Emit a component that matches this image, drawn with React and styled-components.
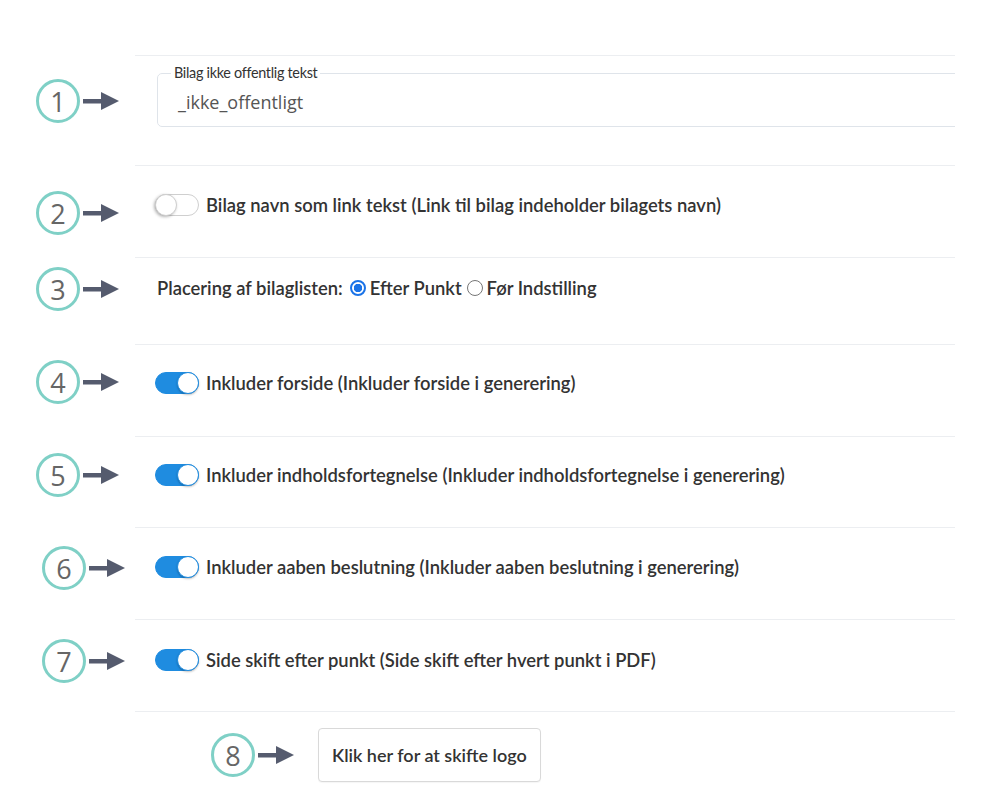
import React from 'react';
import styled, { createGlobalStyle } from 'styled-components';

const GlobalStyle = createGlobalStyle`
  html, body {
    margin: 0;
    padding: 0;
    background: #ffffff;
    font-family: Lato, "Open Sans", sans-serif;
  }
`;

const Page = styled.div`
  width: 981px;
  height: 795px;
  padding-top: 55px;
  box-sizing: border-box;
  overflow: hidden;
`;

const Row = styled.div`
  display: grid;
  grid-template-columns: 135px 820px;
  height: ${p => p.$height}px;
`;

const CalloutCell = styled.div`
  display: flex;
  align-items: center;
  height: 44px;
  padding-top: ${p => p.$center - 22}px;
  padding-left: ${p => p.$left}px;
  gap: 3px;
`;

const Circle = styled.div`
  width: 44px;
  height: 44px;
  box-sizing: border-box;
  border: 3.5px solid #7fd0c6;
  border-radius: 50%;
  display: flex;
  align-items: center;
  justify-content: center;
  font-family: "Open Sans", sans-serif;
  font-size: 27px;
  font-weight: 400;
  color: #666666;
  line-height: 1;
  flex-shrink: 0;
`;

const Content = styled.div`
  border-top: 1px solid #eceef1;
  padding-top: ${p => p.$pad}px;
  padding-left: ${p => p.$left ?? 20}px;
  overflow: hidden;
  box-sizing: border-box;
`;

const Line = styled.div`
  display: flex;
  align-items: center;
  height: 22px;
  gap: ${p => p.$gap ?? 7}px;
  font-size: 18.4px;
  font-weight: 600;
  color: #333333;
  white-space: nowrap;
`;

const Fieldset = styled.fieldset`
  margin: 0 0 0 2px;
  width: 860px;
  border: 1px solid #dfe4ea;
  border-radius: 5px;
  padding: 0 20px 11px 20px;
`;

const Legend = styled.legend`
  font-size: 14.4px;
  line-height: 14px;
  color: #333333;
  padding: 0 3px;
  margin-left: -7px;
  letter-spacing: -0.3px;
`;

const Value = styled.div`
  padding-top: 9px;
  font-family: "Open Sans", sans-serif;
  font-size: 18px;
  line-height: 26px;
  color: #555555;
`;

const Switch = styled.span`
  position: relative;
  display: inline-block;
  width: 44px;
  height: 22px;
  box-sizing: border-box;
  border-radius: 11px;
  background: ${p => (p.$on ? '#1f8ce0' : '#ffffff')};
  border: 1px solid ${p => (p.$on ? '#1f8ce0' : '#cfcfcf')};
  flex-shrink: 0;

  &::after {
    content: '';
    position: absolute;
    top: -1px;
    ${p => (p.$on ? 'right: -1px;' : 'left: -1px;')}
    width: 22px;
    height: 22px;
    box-sizing: border-box;
    border-radius: 50%;
    background: #ffffff;
    border: 1px solid ${p => (p.$on ? '#1f8ce0' : '#cfcfcf')};
    box-shadow: ${p => (p.$on ? '0 1px 2px rgba(0,0,0,0.25)' : '-1px 1px 3px rgba(0,0,0,0.3)')};
  }
`;

const Radio = styled.span`
  display: inline-block;
  width: 16px;
  height: 16px;
  box-sizing: border-box;
  border-radius: 50%;
  border: ${p => (p.$checked ? '2px solid #1a73e8' : '1px solid #767676')};
  background: ${p => (p.$checked ? 'radial-gradient(circle, #1a73e8 0 4px, #fff 4.5px)' : '#fff')};
  margin: 0 4px 0 ${p => p.$ml ?? 5}px;
`;

const RadioGroup = styled.span`
  display: inline-flex;
  align-items: center;
`;

const Button = styled.button`
  height: 54px;
  padding: 0 13px;
  background: #ffffff;
  border: 1px solid #d9d9d9;
  border-radius: 4px;
  font-family: Lato, sans-serif;
  font-size: 18px;
  font-weight: 600;
  color: #333333;
  margin-left: 21px;
  box-shadow: 0 1px 1px rgba(0, 0, 0, 0.04);
`;

const Arrow = () => (
  <svg width="36" height="18" viewBox="0 0 36 18">
    <rect x="0" y="7" width="20" height="4.5" fill="#555b6e" />
    <polygon points="18,0 36,9 18,18" fill="#555b6e" />
  </svg>
);

const Callout = ({ n, center, left = 36 }) => (
  <CalloutCell $center={center} $left={left}>
    <Circle>{n}</Circle>
    <Arrow />
  </CalloutCell>
);

const ToggleRow = ({ n, on, text, height = 92, pad = 29, center, left }) => (
  <Row $height={height}>
    <Callout n={n} center={center ?? pad + 11} left={left} />
    <Content $pad={pad}>
      <Line>
        <Switch $on={on} />
        <span>{text}</span>
      </Line>
    </Content>
  </Row>
);

export default function App() {
  return (
    <Page>
      <GlobalStyle />
      <Row $height={110}>
        <Callout n={1} center={46} />
        <Content $pad={10} $left={20}>
          <Fieldset>
            <Legend>Bilag ikke offentlig tekst</Legend>
            <Value>_ikke_offentligt</Value>
          </Fieldset>
        </Content>
      </Row>

      <ToggleRow n={2} on={false} pad={28} center={48}
        text="Bilag navn som link tekst (Link til bilag indeholder bilagets navn)" />

      <Row $height={87}>
        <Callout n={3} center={32} />
        <Content $pad={19} $left={22}>
          <Line $gap={0}>
            <span>Placering af bilaglisten:</span>
            <RadioGroup><Radio $checked $ml={7} />Efter Punkt</RadioGroup>
            <RadioGroup><Radio />Før Indstilling</RadioGroup>
          </Line>
        </Content>
      </Row>

      <ToggleRow n={4} on pad={27} center={38}
        text="Inkluder forside (Inkluder forside i generering)" />
      <ToggleRow n={5} on pad={27} height={91} center={39}
        text="Inkluder indholdsfortegnelse (Inkluder indholdsfortegnelse i generering)" />
      <ToggleRow n={6} on pad={28} left={42} center={41}
        text="Inkluder aaben beslutning (Inkluder aaben beslutning i generering)" />
      <ToggleRow n={7} on pad={29} left={42} center={42}
        text="Side skift efter punkt (Side skift efter hvert punkt i PDF)" />

      <Row $height={84}>
        <div />
        <Content $pad={16} $left={76}>
          <Line style={{ height: 54 }} $gap={3}>
            <Circle>8</Circle>
            <Arrow />
            <Button>Klik her for at skifte logo</Button>
          </Line>
        </Content>
      </Row>
    </Page>
  );
}
